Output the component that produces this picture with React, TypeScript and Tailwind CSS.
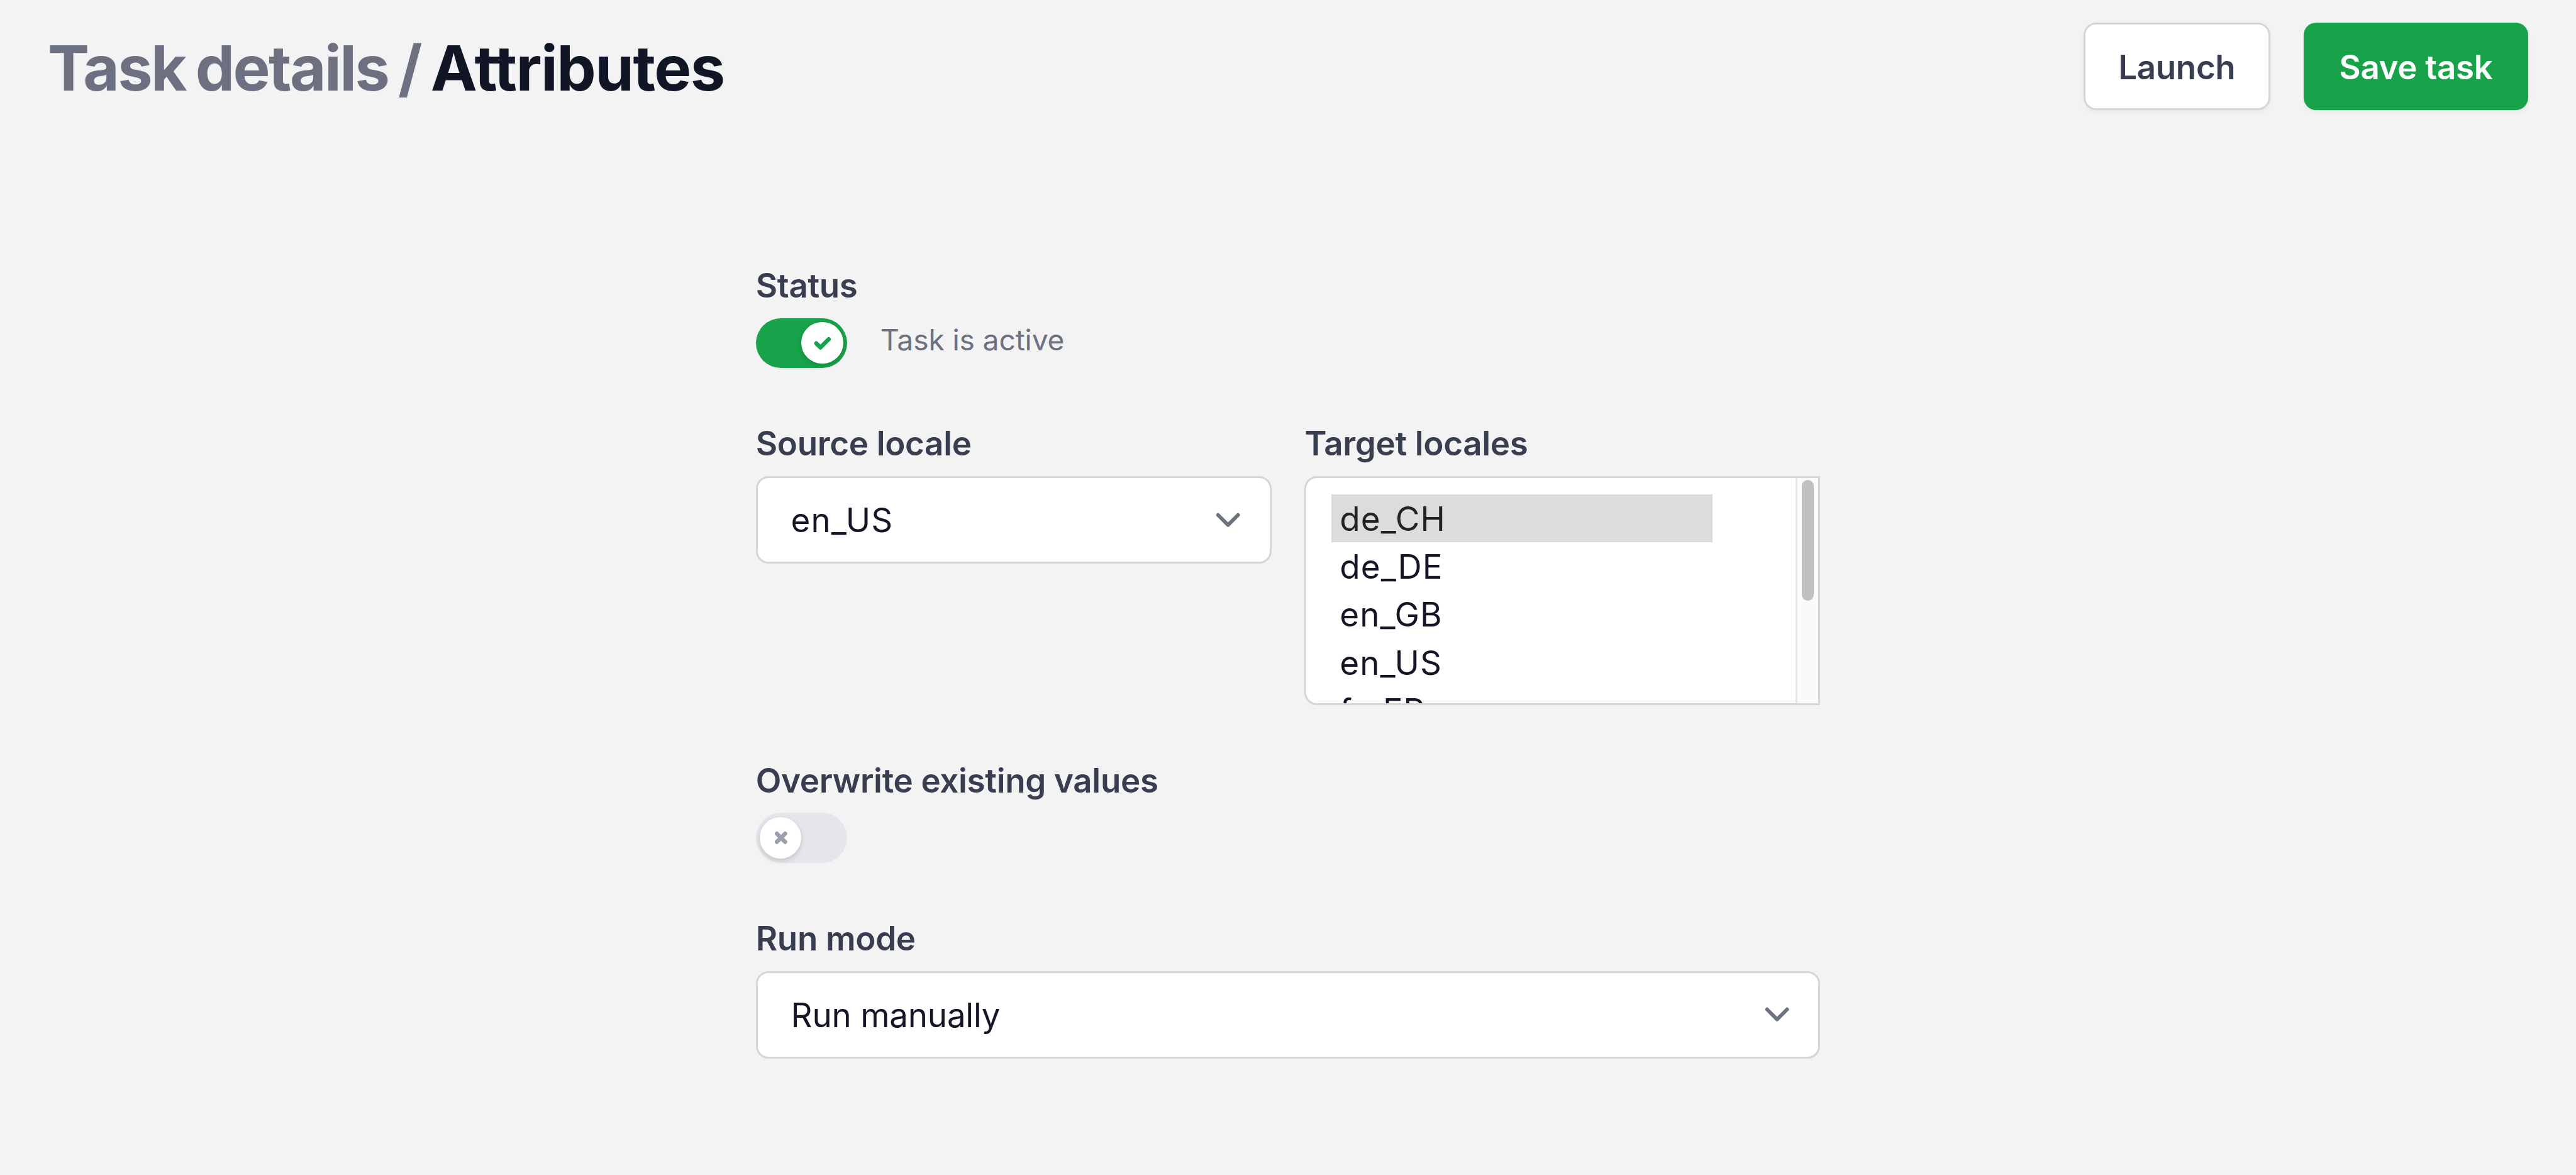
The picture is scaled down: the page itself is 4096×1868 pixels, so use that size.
import { useState } from 'react';
import type { ReactNode } from 'react';
import clsx from 'clsx';

const LOCALES = ['de_CH', 'de_DE', 'en_GB', 'en_US', 'fr_FR'];

function CheckIcon() {
  return (
    <svg className="size-12 text-[#16a34a]" fill="currentColor" viewBox="0 0 12 12">
      <path d="M3.707 5.293a1 1 0 00-1.414 1.414l1.414-1.414zM5 8l-.707.707a1 1 0 001.414 0L5 8zm4.707-3.293a1 1 0 00-1.414-1.414l1.414 1.414zm-7.414 2l2 2 1.414-1.414-2-2-1.414 1.414zm3.414 2l4-4-1.414-1.414-4 4 1.414 1.414z" />
    </svg>
  );
}

function CrossIcon() {
  return (
    <svg className="size-12 text-[#9c9fae]" fill="none" viewBox="0 0 12 12">
      <path
        d="M4 8l2-2m0 0l2-2M6 6L4 4m2 2l2 2"
        stroke="currentColor"
        strokeWidth={2}
        strokeLinecap="round"
        strokeLinejoin="round"
      />
    </svg>
  );
}

function ChevronIcon() {
  return (
    <svg className="size-24 text-[#6b7280]" fill="none" viewBox="0 0 20 20">
      <path
        d="M6 8l4 4 4-4"
        stroke="currentColor"
        strokeWidth={1.5}
        strokeLinecap="round"
        strokeLinejoin="round"
      />
    </svg>
  );
}

function Field({ label, children }: { label: string; children: ReactNode }) {
  return (
    <div className="flex min-w-0 flex-1 flex-col items-start gap-4">
      <span className="h-24 leading-25 font-semibold tracking-[-0.006em] text-[#383e50]">{label}</span>
      {children}
    </div>
  );
}

function Toggle({ enabled, onChange }: { enabled: boolean; onChange: (value: boolean) => void }) {
  return (
    <button
      type="button"
      role="switch"
      aria-checked={enabled}
      onClick={() => onChange(!enabled)}
      className={clsx(
        'flex h-24 w-44 shrink-0 items-center rounded-full p-2',
        enabled ? 'justify-end bg-[#18a34a]' : 'justify-start bg-[#e5e5ec]'
      )}
    >
      <span className="flex size-20 items-center justify-center rounded-full bg-white shadow-[0_3px_10px_rgba(0,0,0,0.1),0_3px_7px_rgba(0,0,0,0.06)]">
        {enabled ? <CheckIcon /> : <CrossIcon />}
      </span>
    </button>
  );
}

function Select({ value, className }: { value: string; className?: string }) {
  return (
    <button
      type="button"
      className={clsx(
        'flex h-42 w-full items-center justify-between rounded-[20px] border-3 border-[#d6d6d8] bg-white pr-8 pl-16 text-[#141627]',
        className
      )}
    >
      <span className="pt-1 leading-24">{value}</span>
      <ChevronIcon />
    </button>
  );
}

function ListBox({
  options,
  value,
  onChange,
}: {
  options: string[];
  value: string;
  onChange: (value: string) => void;
}) {
  return (
    <div className="flex h-110 w-full overflow-hidden rounded-l-[20px] border-3 border-[#d6d6d8] bg-white">
      <ul className="flex-1 overflow-hidden pt-8 pr-40 pl-12 tracking-[0.02em]">
        {options.map((option) => (
          <li
            key={option}
            onClick={() => onChange(option)}
            className={clsx(
              'h-23 px-4 leading-24',
              option === value ? 'bg-[#dcdcdc] text-[#232323]' : 'text-[#141627]'
            )}
          >
            {option}
          </li>
        ))}
      </ul>
      <div className="w-11 border-l-3 border-[#e8e8e8] bg-[#fafafa] pt-1 pl-2">
        <div className="h-58 w-6 rounded-full bg-[#c1c1c1]" />
      </div>
    </div>
  );
}

export default function App() {
  const [active, setActive] = useState(true);
  const [overwrite, setOverwrite] = useState(false);
  const [target, setTarget] = useState('de_CH');

  return (
    <div className="h-screen overflow-hidden bg-[#f3f3f4] font-[Inter,sans-serif] text-[52.9px] [--spacing:3.3059px]">
      <header className="flex items-start justify-between px-23 pt-11">
        <h1 className="pt-3.75 text-[99.2px] leading-36 font-bold tracking-[-0.016em] text-[#111627]">
          <span className="tracking-[-0.027em] text-[#6c7080] [word-spacing:-5px]">Task details / </span>
          Attributes
        </h1>
        <div className="flex gap-16 font-semibold tracking-[-0.006em]">
          <button
            type="button"
            className="h-42 w-90 rounded-[20px] border-3 border-[#d6d6d8] bg-white pt-1 text-[#383e50] shadow-[0_3px_7px_rgba(0,0,0,0.05)]"
          >
            Launch
          </button>
          <button
            type="button"
            className="h-42 w-108 rounded-[20px] bg-[#18a34a] pt-1 text-white shadow-[0_3px_7px_rgba(0,0,0,0.05)]"
          >
            Save task
          </button>
        </div>
      </header>

      <main className="ml-363.5 flex w-512 flex-col gap-24 pt-72">
        <Field label="Status">
          <div className="flex gap-16">
            <Toggle enabled={active} onChange={setActive} />
            <span className="text-[46.3px] leading-21 tracking-[-0.004em] text-[#6c7080]">Task is active</span>
          </div>
        </Field>

        <div className="flex gap-16">
          <Field label="Source locale">
            <Select value="en_US" className="tracking-[0.02em]" />
          </Field>
          <Field label="Target locales">
            <ListBox options={LOCALES} value={target} onChange={setTarget} />
          </Field>
        </div>

        <Field label="Overwrite existing values">
          <Toggle enabled={overwrite} onChange={setOverwrite} />
        </Field>

        <Field label="Run mode">
          <Select value="Run manually" className="tracking-[-0.004em]" />
        </Field>
      </main>
    </div>
  );
}
